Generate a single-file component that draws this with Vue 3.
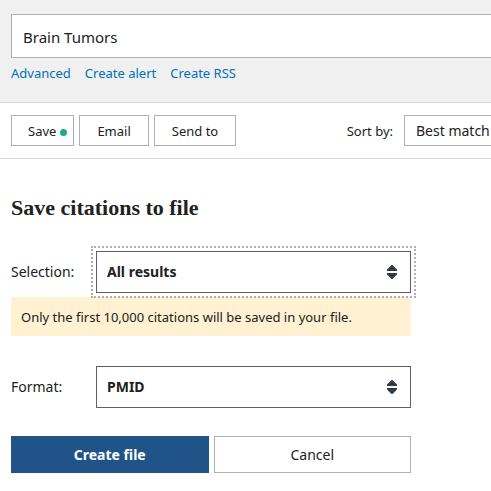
<script setup>
import { ref } from 'vue'

const term = ref('Brain Tumors')
const sort = ref('Best match')
const selection = ref('All results')
const format = ref('PMID')
const links = ['Advanced', 'Create alert', 'Create RSS']
</script>

<template>
  <div class="page">
    <header class="search">
      <input v-model="term" class="search-box" type="text" aria-label="Search term" />
      <nav class="links">
        <a v-for="link in links" :key="link" href="#">{{ link }}</a>
      </nav>
    </header>

    <div class="toolbar">
      <button type="button" class="tool save">Save<span class="dot"></span></button>
      <button type="button" class="tool">Email</button>
      <button type="button" class="tool">Send to</button>
      <label class="sort-label" for="sort">Sort by:</label>
      <select id="sort" v-model="sort" class="sort">
        <option>Best match</option>
        <option>Most recent</option>
      </select>
    </div>

    <form class="panel" @submit.prevent>
      <h2>Save citations to file</h2>

      <div class="row">
        <label for="selection">Selection:</label>
        <div class="picker">
          <select id="selection" v-model="selection" class="focused">
            <option>All results</option>
            <option>All results on this page</option>
          </select>
          <svg class="arrows" viewBox="0 0 10 14" aria-hidden="true">
            <path d="M4.5 0H5.5L10 4.5V6H0V4.5ZM0 8H10V9.5L5.5 14H4.5L0 9.5Z" />
          </svg>
        </div>
      </div>
      <p class="note">Only the first 10,000 citations will be saved in your file.</p>

      <div class="row format">
        <label for="format">Format:</label>
        <div class="picker">
          <select id="format" v-model="format">
            <option>PMID</option>
            <option>PubMed</option>
          </select>
          <svg class="arrows" viewBox="0 0 10 14" aria-hidden="true">
            <path d="M4.5 0H5.5L10 4.5V6H0V4.5ZM0 8H10V9.5L5.5 14H4.5L0 9.5Z" />
          </svg>
        </div>
      </div>

      <div class="actions">
        <button type="submit" class="create">Create file</button>
        <button type="button" class="cancel">Cancel</button>
      </div>
    </form>
  </div>
</template>

<style>
body {
  margin: 0;
  background: #fff;
}
</style>

<style scoped>
.page {
  font-family: "Noto Sans", "Open Sans", sans-serif;
  font-size: 13px;
  line-height: 20px;
  color: #212121;
  overflow: hidden;
}
.page * {
  box-sizing: border-box;
}
input,
select,
button {
  margin: 0;
  border: 1px solid #aeb0b5;
  border-radius: 0;
  background: #fff;
  color: inherit;
  font: inherit;
  appearance: none;
}
.search {
  padding: 14px 0 19px 11px;
  background: #f0f0f0;
  border-bottom: 1px solid #d6d7d9;
}
.search-box {
  display: block;
  width: 100%;
  height: 44px;
  padding: 2px 11px 0;
  border-right: 0;
  font-size: 15px;
}
.links {
  display: flex;
  gap: 14px;
  padding-top: 5px;
}
.links a {
  color: #0071bc;
  text-decoration: none;
}
.toolbar {
  display: flex;
  align-items: center;
  gap: 5px;
  padding: 12px 0 12px 11px;
  border-bottom: 1px solid #d6d7d9;
}
.tool {
  height: 31px;
  padding: 0 17px;
  white-space: nowrap;
}
.save {
  display: flex;
  align-items: center;
  gap: 4px;
  padding: 0 6px 0 16px;
}
.dot {
  width: 7px;
  height: 7px;
  margin-top: 3px;
  border-radius: 50%;
  background: #20a888;
}
.sort-label {
  margin-left: auto;
  padding-right: 6px;
}
.sort {
  width: 87px;
  height: 31px;
  padding: 0 0 0 11px;
  border-right: 0;
  font-size: 14px;
}
.panel {
  max-width: 411px;
  padding: 36px 0 18px 11px;
}
h2 {
  margin: 0;
  font-family: "Liberation Serif", serif;
  font-size: 22px;
  line-height: 26px;
  font-weight: 700;
}
.row {
  display: flex;
  align-items: center;
  margin-top: 30px;
}
.row label {
  flex: 0 0 85px;
  font-size: 14px;
}
.picker {
  position: relative;
  flex: 1;
}
.picker select {
  display: block;
  width: 100%;
  height: 42px;
  padding: 0 32px 0 10px;
  border-color: #5b616b;
  font-size: 14px;
  font-weight: 700;
}
.picker .focused {
  outline: 2px dotted #aeb0b5;
  outline-offset: 3px;
}
.arrows {
  position: absolute;
  top: 14px;
  right: 14px;
  width: 10px;
  height: 14px;
  fill: #323a45;
  pointer-events: none;
}
.note {
  margin: 4px 0 0;
  padding: 10px 10px 9px;
  background: #fff1d2;
}
.actions {
  display: flex;
  gap: 5px;
  margin-top: 28px;
}
.actions button {
  flex: 1 1 0;
  height: 37px;
  font-size: 14px;
}
.actions .create {
  flex-basis: 2px;
  border-color: #205488;
  background: #205488;
  color: #fff;
  font-weight: 700;
}
</style>
